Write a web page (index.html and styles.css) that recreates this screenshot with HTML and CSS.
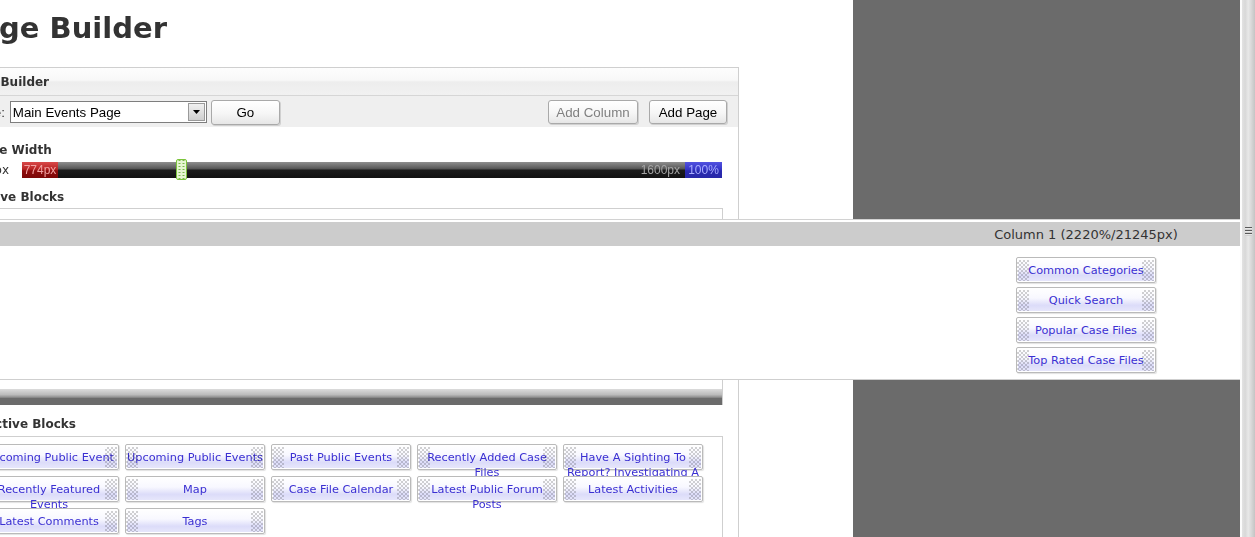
FILE: index.html
```html
<!DOCTYPE html>
<html lang="en">
<head>
<meta charset="utf-8">
<title>Page Builder</title>
<link rel="stylesheet" href="styles.css">
</head>
<body>
<div class="screen">
  <div class="main">
    <div class="page">
      <h1 class="title">Page Builder</h1>
      <div class="panel">
        <div class="panel-head">Page Builder</div>
        <div class="toolbar">
          <div class="tb-group">
            <label class="tb-label">Page:</label>
            <div class="select">
              <span class="select-text">Main Events Page</span>
              <span class="select-arrow"><svg width="7" height="4" viewBox="0 0 7 4"><path d="M0 0H7L3.5 4Z" fill="#000"/></svg></span>
            </div>
            <button class="btn btn-go">Go</button>
          </div>
          <div class="tb-group tb-right">
            <button class="btn btn-col" disabled>Add Column</button>
            <button class="btn btn-page">Add Page</button>
          </div>
        </div>
        <div class="panel-body">
          <div class="label label-width">Page Width</div>
          <div class="slider-row">
            <span class="min">0px</span>
            <div class="track">
              <span class="cur">774px</span>
              <span class="handle"></span>
              <span class="max">1600px</span>
              <span class="pct">100%</span>
            </div>
          </div>
          <div class="label label-active">Active Blocks</div>
          <div class="active-box">
            <div class="active-area"></div>
            <div class="hscroll"></div>
          </div>
          <div class="label label-inactive">Inactive Blocks</div>
          <div class="inactive-box">
            <div class="block">Upcoming Public Event</div>
            <div class="block">Upcoming Public Events</div>
            <div class="block">Past Public Events</div>
            <div class="block">Recently Added Case Files</div>
            <div class="block">Have A Sighting To Report? Investigating A Case?</div>
            <div class="block">Recently Featured Events</div>
            <div class="block">Map</div>
            <div class="block">Case File Calendar</div>
            <div class="block">Latest Public Forum Posts</div>
            <div class="block">Latest Activities</div>
            <div class="block">Latest Comments</div>
            <div class="block">Tags</div>
          </div>
        </div>
      </div>
    </div>
  </div>
  <div class="side"></div>
  <div class="strip"><span class="grip"></span></div>

  <div class="drag-column">
    <div class="col-head"><span class="col-title">Column 1 (2220%/21245px)</span></div>
    <div class="col-body">
      <div class="col-blocks">
        <div class="block">Common Categories</div>
        <div class="block">Quick Search</div>
        <div class="block">Popular Case Files</div>
        <div class="block">Top Rated Case Files</div>
      </div>
    </div>
  </div>
</div>
</body>
</html>
```

FILE: styles.css
```css
html, body {
  margin: 0;
  padding: 0;
  background: #fff;
}
body {
  overflow: hidden;
  font-family: "DejaVu Sans", Verdana, sans-serif;
  color: #333;
}
.screen {
  position: relative;
  width: 1255px;
  height: 537px;
  display: flex;
  overflow: hidden;
}
.main {
  width: 853px;
  flex: none;
  overflow: hidden;
}
.page {
  margin-left: -60px;
  width: 900px;
}
.side {
  width: 387px;
  flex: none;
  background: #6b6b6b;
}
.strip {
  position: relative;
  width: 15px;
  flex: none;
  background: linear-gradient(to right, #fbfbfb 0, #fbfbfb 2px, #e2e2e2 2px, #d8d8d8 35%, #e8e8e8 55%, #c4c4c4 100%);
}
.grip {
  position: absolute;
  left: 5px;
  top: 227px;
  width: 7px;
  height: 9px;
  background: repeating-linear-gradient(to bottom, #5a5a5a 0, #5a5a5a 1px, #e8e8e8 1px, #e8e8e8 2px, #d0d0d0 2px, #d0d0d0 3px);
}

/* title */
.title {
  margin: 0;
  padding: 10px 0 0 19px;
  font-size: 29px;
  line-height: 36px;
  font-weight: bold;
  color: #333;
  white-space: nowrap;
}

/* panel */
.panel {
  margin: 21px 0 0 15px;
  width: 784px;
  box-sizing: border-box;
  border: 1px solid #cfcfcf;
  border-bottom: none;
  height: 480px;
}
.panel-head {
  box-sizing: border-box;
  height: 28px;
  line-height: 29px;
  padding-left: 7px;
  font-size: 12px;
  font-weight: bold;
  color: #333;
  white-space: nowrap;
  border-bottom: 1px solid #d6d6d6;
  background: linear-gradient(#fdfdfd 0%, #f8f8f8 45%, #ededed 52%, #f1f1f1 100%);
}
.toolbar {
  box-sizing: border-box;
  height: 31px;
  display: flex;
  align-items: center;
  justify-content: space-between;
  padding: 1px 11px 0 14px;
  background: #efefef;
  font-family: "Liberation Sans", Arial, sans-serif;
  font-size: 13.33px;
}
.tb-group {
  display: flex;
  align-items: center;
}
.tb-right {
  gap: 11px;
}
.tb-label {
  color: #333;
  margin-right: 5px;
  white-space: nowrap;
}
.select {
  box-sizing: border-box;
  width: 197px;
  height: 22px;
  border: 1px solid #7e7e7e;
  background: #fff;
  display: flex;
  align-items: center;
  justify-content: space-between;
  padding: 0 1px 0 2px;
  color: #000;
}
.select-text {
  white-space: nowrap;
  padding-top: 1px;
}
.select-arrow {
  box-sizing: border-box;
  width: 17px;
  height: 18px;
  border: 1px solid #9a9a9a;
  background: linear-gradient(#f0f0f0, #cfcfcf);
  display: flex;
  align-items: center;
  justify-content: center;
}
.btn {
  box-sizing: border-box;
  font-family: "Liberation Sans", Arial, sans-serif;
  font-size: 13.33px;
  padding: 1px 0 0;
  border: 1px solid #a9a9a9;
  border-radius: 3px;
  background: linear-gradient(#ffffff 0%, #f6f6f6 55%, #e6e6e6 100%);
  box-shadow: 1px 1px 0 #d0d0d0;
  color: #000;
}
.btn-go {
  width: 69px;
  height: 25px;
  margin-left: 4px;
}
.btn-col {
  width: 90px;
  height: 24px;
  color: #808080;
}
.btn-page {
  width: 78px;
  height: 24px;
}

/* body */
.panel-body {
  padding: 0 15px;
}
.label {
  font-size: 12px;
  line-height: 15px;
  font-weight: bold;
  padding-left: 3px;
  white-space: nowrap;
  color: #333;
}
.label-width {
  margin-top: 16px;
}
.label-active {
  margin-top: 12px;
}
.label-inactive {
  margin-top: 12px;
}
.slider-row {
  margin-top: 4px;
  display: flex;
  align-items: center;
  height: 16px;
}
.min {
  width: 38px;
  margin-right: 13px;
  text-align: right;
  font-size: 12px;
  color: #333;
}
.track {
  position: relative;
  width: 700px;
  height: 16px;
  display: flex;
  align-items: stretch;
  background: linear-gradient(#8e8e8e 0%, #5a5a5a 40%, #1c1c1c 52%, #121212 100%);
  font-family: "Liberation Sans", Arial, sans-serif;
  font-size: 12px;
  line-height: 16px;
}
.cur {
  width: 36px;
  text-align: center;
  color: #f2a3a3;
  background: linear-gradient(#d94a4a 0%, #b82424 45%, #8e0c0c 55%, #7c0808 100%);
}
.handle {
  position: absolute;
  left: 154px;
  top: -3px;
  box-sizing: border-box;
  width: 11px;
  height: 21px;
  border: 1px solid #7cc43c;
  border-radius: 2px;
  background-color: #e6f6d2;
  background-image: radial-gradient(circle, #79b84a 0.8px, transparent 1px);
  background-size: 4px 3px;
  background-position: 0.5px 2px;
}
.max {
  margin-left: auto;
  margin-right: 5px;
  color: #a4a4a4;
}
.pct {
  width: 37px;
  text-align: center;
  color: #a9adff;
  background: linear-gradient(#5252e0 0%, #3535c8 45%, #2a2ab0 55%, #2828a8 100%);
}
.active-box {
  margin-top: 3px;
  border: 1px solid #cfcfcf;
  border-bottom: none;
}
.active-area {
  height: 180px;
}
.hscroll {
  height: 16px;
  background: linear-gradient(#dcdcdc 0%, #bcbcbc 35%, #8f8f8f 52%, #6b6b6b 58%, #6b6b6b 100%);
}
.inactive-box {
  margin-top: 4px;
  border: 1px solid #cfcfcf;
  padding: 7px;
  display: grid;
  grid-template-columns: repeat(5, 140px);
  grid-auto-rows: 26px;
  align-content: start;
  gap: 6px;
}

/* block buttons */
.block {
  position: relative;
  box-sizing: border-box;
  width: 140px;
  height: 26px;
  padding: 5px 0 0;
  border: 1px solid #bababa;
  border-radius: 2px;
  box-shadow: inset 0 0 0 1px #ffffff, 1px 1px 1px rgba(0, 0, 0, 0.12);
  background: linear-gradient(#ffffff 0%, #f8f8ff 42%, #dcdcf9 72%, #e8e8fc 100%);
  font-size: 11.3px;
  line-height: 15px;
  text-align: center;
  color: #3a2fd2;
}
.block::before,
.block::after {
  content: "";
  position: absolute;
  top: 2px;
  bottom: 1px;
  width: 12px;
  background-image: conic-gradient(#d2d2d2 25%, #ffffff 0 50%, #d2d2d2 0 75%, #ffffff 0);
  background-size: 4px 4px;
  mix-blend-mode: multiply;
}
.block::before {
  left: 0;
}
.block::after {
  right: 1px;
}

/* dragged column overlay */
.drag-column {
  position: absolute;
  left: 0;
  top: 219px;
  width: 1240px;
  box-sizing: border-box;
  height: 161px;
  background: #fff;
  border-top: 1px solid #d2d2d2;
  border-bottom: 1px solid #cfcfcf;
  padding-top: 2px;
}
.col-head {
  height: 24px;
  background: #cccccc;
  display: flex;
  justify-content: flex-end;
}
.col-title {
  width: 308px;
  text-align: center;
  font-size: 13px;
  line-height: 26px;
  color: #333;
  white-space: nowrap;
}
.col-body {
  display: flex;
  justify-content: flex-end;
}
.col-blocks {
  width: 308px;
  margin-top: 11px;
  display: flex;
  flex-direction: column;
  align-items: center;
  gap: 4px;
}
```
